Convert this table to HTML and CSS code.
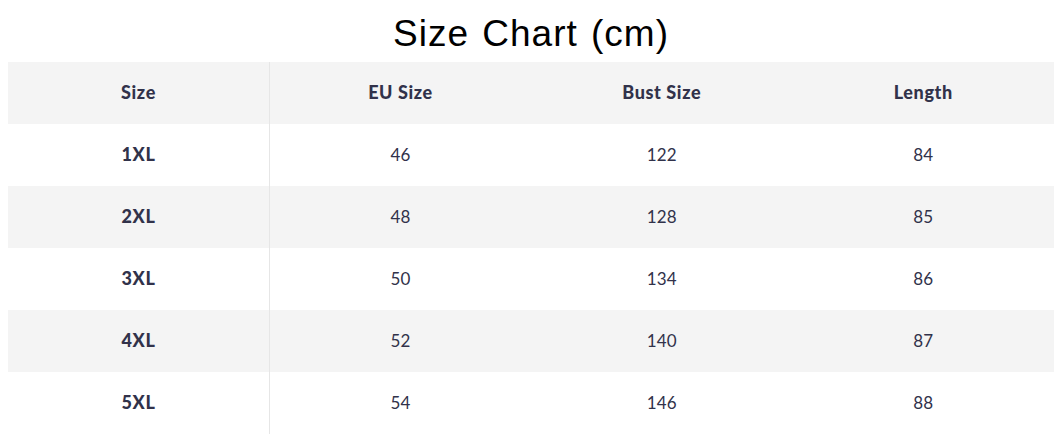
FILE: index.html
```html
<!DOCTYPE html>
<html lang="en">
<head>
<meta charset="utf-8">
<title>Size Chart</title>
<link rel="stylesheet" href="styles.css">
</head>
<body>
<div class="page">
  <h1 class="title">Size Chart (cm)</h1>
  <table class="chart">
    <thead>
      <tr class="row shade">
        <th class="cell first">Size</th>
        <th class="cell">EU Size</th>
        <th class="cell">Bust Size</th>
        <th class="cell">Length</th>
      </tr>
    </thead>
    <tbody>
      <tr class="row">
        <td class="cell first label">1XL</td><td class="cell">46</td><td class="cell">122</td><td class="cell">84</td>
      </tr>
      <tr class="row shade">
        <td class="cell first label">2XL</td><td class="cell">48</td><td class="cell">128</td><td class="cell">85</td>
      </tr>
      <tr class="row">
        <td class="cell first label">3XL</td><td class="cell">50</td><td class="cell">134</td><td class="cell">86</td>
      </tr>
      <tr class="row shade">
        <td class="cell first label">4XL</td><td class="cell">52</td><td class="cell">140</td><td class="cell">87</td>
      </tr>
      <tr class="row">
        <td class="cell first label">5XL</td><td class="cell">54</td><td class="cell">146</td><td class="cell">88</td>
      </tr>
    </tbody>
  </table>
</div>
</body>
</html>
```
FILE: styles.css
```css
html, body {
  margin: 0;
  padding: 0;
  background: #ffffff;
}

.page {
  padding: 0 3px 0 8px;
}

.title {
  margin: 0;
  padding-top: 13px;
  height: 62px;
  box-sizing: border-box;
  font-family: "Liberation Sans", Arial, sans-serif;
  font-weight: normal;
  font-size: 37px;
  line-height: 42px;
  color: #000000;
  text-align: center;
  letter-spacing: 1px;
  word-spacing: 2px;
}

.chart {
  width: 1046px;
  border-collapse: collapse;
  table-layout: fixed;
  font-family: Lato, "Noto Sans", sans-serif;
  font-size: 17px;
  color: #31324a;
}

.row {
  height: 62px;
}

.row.shade {
  background: #f4f4f4;
}

.cell {
  padding: 0 0 2px 0;
  text-align: center;
  vertical-align: middle;
  font-weight: 400;
  letter-spacing: 0.2px;
}

th.cell, .cell.label {
  font-weight: 900;
  font-size: 18px;
  letter-spacing: 0.6px;
}

.cell.first {
  border-right: 1px solid #e6e6e6;
}
```
